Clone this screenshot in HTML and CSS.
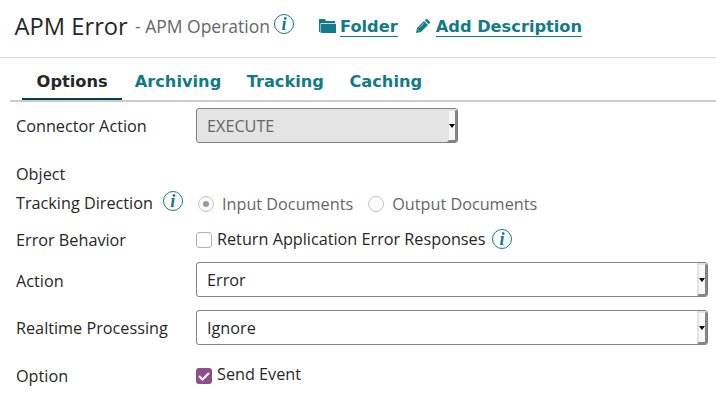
FILE: index.html
```html
<!DOCTYPE html>
<html lang="en">
<head>
<meta charset="utf-8">
<title>APM Error</title>
<link rel="stylesheet" href="styles.css">
</head>
<body>
<header class="header">
  <h1 class="title">APM Error</h1>
  <span class="subtitle">- APM Operation</span>
  <span class="info">i</span>
  <a class="link folder"><svg class="folder-icon" width="17" height="14" viewBox="0 0 17 14"><path d="M0 0h6l1 2h9v2H2v9H0z"/><path d="M1.5 4.5H17V14H1.5z"/><path class="seam" d="M1.5 14V4.5H17"/></svg><span class="link-text">Folder</span></a>
  <a class="link describe"><svg class="pencil-icon" width="14" height="14" viewBox="0 0 14 14"><path d="M0 14l1-5 7-7 4 4-7 7z"/><path d="M8.8 1.3L10 .2q.6-.5 1.2 0l2.6 2.6q.5.6 0 1.2l-1.1 1.2z"/><path class="shine" d="M3 9.2l5.2-5.2M1.5 10.6l1.8 1.8"/></svg><span class="link-text">Add Description</span></a>
</header>
<nav class="tabs">
  <a class="tab active">Options</a>
  <a class="tab">Archiving</a>
  <a class="tab">Tracking</a>
  <a class="tab">Caching</a>
</nav>
<main class="form">
  <div class="row connector">
    <span class="label">Connector Action</span>
    <div class="select disabled"><span>EXECUTE</span><i class="arrow"></i></div>
  </div>
  <div class="row object"><span class="label">Object</span></div>
  <div class="row direction">
    <span class="label">Tracking Direction<span class="info">i</span></span>
    <div class="choices">
      <span class="radio checked"></span><span class="choice">Input Documents</span>
      <span class="radio"></span><span class="choice">Output Documents</span>
    </div>
  </div>
  <div class="row behavior">
    <span class="label">Error Behavior</span>
    <div class="choices"><span class="check"></span><span class="choice">Return Application Error Responses</span><span class="info">i</span></div>
  </div>
  <div class="row action">
    <span class="label">Action</span>
    <div class="select"><span>Error</span><i class="arrow"></i></div>
  </div>
  <div class="row realtime">
    <span class="label">Realtime Processing</span>
    <div class="select"><span>Ignore</span><i class="arrow"></i></div>
  </div>
  <div class="row option">
    <span class="label">Option</span>
    <div class="choices"><span class="check checked"><svg width="16" height="16" viewBox="0 0 16 16"><path d="M3 8l3.5 3.5L13 5"/></svg></span><span class="choice">Send Event</span></div>
  </div>
</main>
</body>
</html>
```

FILE: styles.css
```css
* { box-sizing: border-box; }
body { margin: 0; background: #fff; color: #272727; font: 16.23px/22px "Open Sans", "Noto Sans", sans-serif; overflow: hidden; }

.header { display: flex; align-items: flex-start; height: 58px; padding-left: 15px; border-bottom: 1px solid #d8d8d8; white-space: nowrap; }
.title { margin: 9px 0 0; width: 120px; font-size: 23.7px; line-height: 34px; font-weight: 400; text-indent: -0.4px; }
.subtitle { margin-top: 14px; width: 139px; font-size: 17.5px; line-height: 24px; color: #666; }
.info { flex: none; display: inline-block; width: 20px; height: 20px; border: 1px solid #127b87; border-radius: 50%; color: #127b87; font: italic bold 18px/18px "Liberation Serif", serif; text-align: center; }
.header .info { margin-top: 14px; }
.link { display: flex; color: #127b87; font: bold 16.23px/19px "DejaVu Sans", sans-serif; }
.link svg { fill: #127b87; margin-top: 19px; }
.link-text { height: 20px; margin-top: 17px; border-bottom: 1px solid #127b87; }
.folder { margin-left: 25px; }
.folder .link-text { margin-left: 4px; }
.describe { margin-left: 18px; }
.describe .link-text { margin-left: 6px; }
.seam, .shine { fill: none; stroke: #fff; stroke-width: .5; }

.tabs { display: flex; height: 44px; margin-left: 10px; padding-left: 12px; border-bottom: 2px solid #ccc; font: bold 16.23px/19px "DejaVu Sans", sans-serif; color: #127b87; }
.tab { height: 42px; margin-right: 25.4px; padding-top: 14px; }
.tab.active { width: 100px; margin-right: 12.7px; padding-left: 14.6px; border-bottom: 2px solid #033d58; color: #272727; }

.form { padding: 0 8px 0 16px; white-space: nowrap; }
.row { display: grid; grid-template-columns: 180px 1fr; align-items: start; }
.label { display: flex; }
.connector { height: 61px; padding-top: 6px; }
.connector .label { margin-top: 7px; }
.object { height: 28px; }
.direction { height: 38px; }
.direction .label { padding-top: 1px; }
.direction .info { margin: -1px 0 0 10px; }
.direction .choices { padding-top: 2px; color: #666; }
.behavior { height: 33px; }
.behavior .choices { margin-top: -1px; }
.behavior .info { margin: 1px 0 0 6.6px; }
.action { height: 48px; }
.action .label { margin-top: 8px; }
.realtime { height: 53px; }
.realtime .label { margin-top: 7px; }
.option .label { margin-top: 2px; }

.select { display: flex; justify-content: space-between; height: 35px; border: 1px solid #808080; border-radius: 3px; padding-left: 10px; line-height: 34px; overflow: hidden; }
.select.disabled { width: 262px; background: #e4e4e4; color: #666; }
.arrow { display: flex; align-items: center; justify-content: center; width: 10px; height: 33px; border: 2px solid; border-color: #e3e3e3 #858585 #858585 #e3e3e3; background: #f7f7f7; }
.arrow::before { content: ""; border: 3px solid transparent; border-top: 4px solid #000; border-bottom: 0; }

.choices { display: flex; }
.radio, .check { flex: none; width: 16px; height: 16px; border: 1px solid #b5b5b5; background: #fafafa; }
.radio { border-color: #c4c4c4; border-radius: 50%; margin: 3px 8px 0 2px; }
.radio.checked { padding: 4px; }
.radio.checked::before { content: ""; display: block; width: 6px; height: 6px; border-radius: 50%; background: #999; }
.choice + .radio { margin-left: 15px; }
.check { margin: 4px 5px 0 0; border-radius: 3px; background: #fff; }
.check.checked { margin-top: 5px; border: 0; background: #904d8b; }
.check svg { display: block; fill: none; stroke: #fff; stroke-width: 2; }
```
